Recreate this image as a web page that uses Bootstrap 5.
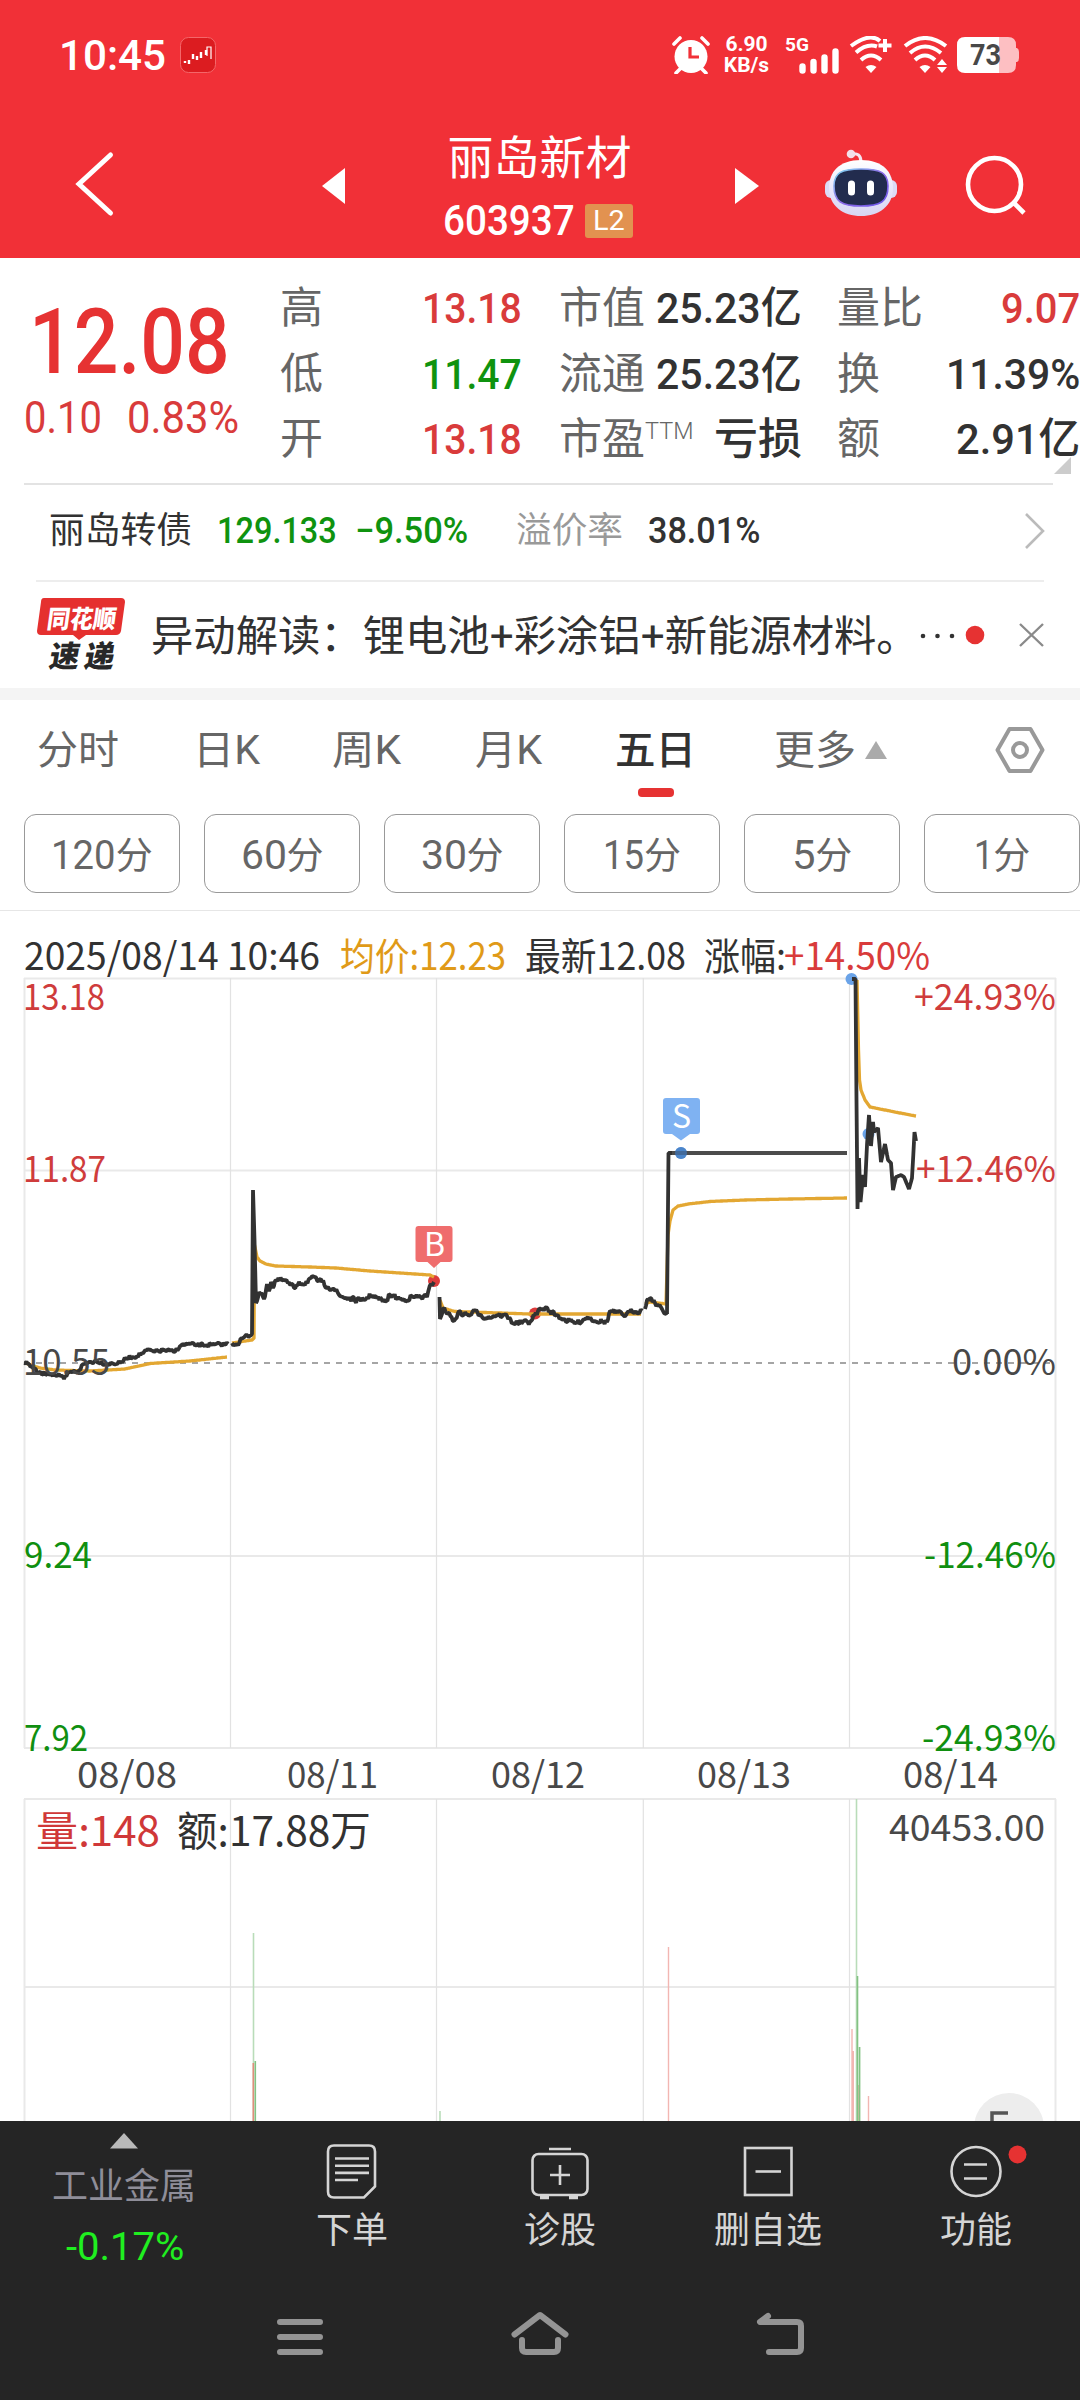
<!DOCTYPE html>
<html lang="zh-CN">
<head>
<meta charset="utf-8">
<meta name="viewport" content="width=device-width, initial-scale=1">
<title>丽岛新材 603937</title>
<link href="https://cdn.jsdelivr.net/npm/bootstrap@5.3.0/dist/css/bootstrap.min.css" rel="stylesheet">
<script src="https://cdn.jsdelivr.net/npm/bootstrap@5.3.0/dist/js/bootstrap.bundle.min.js"></script>
<style>
body{width:1080px;height:2400px;overflow:hidden;background:#fff;color:#323232;font-family:Roboto,"Noto Sans CJK SC",sans-serif;line-height:1}
svg{display:block;flex:none}
.fit{display:inline-block;white-space:nowrap;transform-origin:0 50%;flex:none}
.up{color:#d93b3b}.down{color:#0f930f}.soft{color:#666}
.app-head{height:258px;background:#f13037;color:#fff}
.status{height:112px;padding:0 60px 2px 59px}
.clock{font-size:43px;font-weight:500}
.speed{font-size:21px;font-weight:700;line-height:21px;text-align:center;width:47px;margin-left:13px}
.titlebar{height:146px}
.name-col{width:222px;padding-top:23px}
.stock-name{font-size:46px;height:46px;margin-left:-3px}
.code-row{margin:18px 6px 0 0}
.stock-code{font-size:43px;font-weight:500}
.lv2{width:48px;height:34px;background:#e29250;border-radius:3px;font-size:28px}
.quote{height:225px;padding-top:18px}
.price-col{width:257px;padding-left:23px}
.price{font-size:90px;font-weight:500;color:#e63232;margin:22px 0 0 6px;height:90px}
.chg{font-size:44px;margin-top:8px;gap:25px;padding-left:1px}
.qrow{height:65.5px;font-size:43px}
.qrow .lab{font-size:43px;color:#666}
.qrow .val{font-weight:500}
.c1{width:242px;margin-left:24px}.c2{width:243px;margin-left:37px}.c3{width:243px;margin-left:35px}
.ttm{font-size:23px;font-weight:300;position:relative;top:-8px;color:#666}
.rule-a{height:2px;background:#e3e3e3;margin:0 27px 0 24px}
.bond{height:95px;font-size:36px;padding:0 34px 3px 49px}
.rule-b{height:2px;background:#ededed;margin:0 36px}
.news{height:106px;padding:0 35px 0 36px;font-size:42px}
.band{height:12px;background:#f4f4f4}
.tabs{height:114px;font-size:40px;color:#666}
.tabs .on{font-weight:500;color:#323232}
.tabs .on::after{content:"";position:absolute;left:23px;top:57px;width:36px;height:9px;border-radius:4px;background:#e63232}
.mins{height:96px;padding:0 0 0 24px;gap:24px}
.mins .btn{width:156px;height:79px;flex:none;border:1px solid #999;border-radius:12px;color:#666;padding:4px 0 0 0;font-size:37px;background:#fff}
.mins .n{font-size:40px}
.rule-c{height:1px;background:#e6e6e6}
.foot{height:279px;background:#252525;color:#d5d5d5;font-size:36px}
.tool{height:164px}
.tool-item{width:208px;padding-top:21px}
.tool-item svg{height:58px;margin-bottom:13px}
</style>
</head>
<body>
<header class="app-head">
  <div class="status d-flex align-items-center">
    <span class="clock fit" data-w="107">10:45</span>
    <svg style="margin-left:14px" width="36" height="36" viewBox="0 0 36 36"><rect x=".5" y=".5" width="35" height="35" rx="8" fill="#dc1c20" stroke="#f4676a"/><path d="M5 24v2M9 23v4M13 17v5M17 19v4M21 15v6M26 13v5" stroke="#fff" stroke-width="2.4"/><path d="M27 19V10h4v12" fill="none" stroke="#fff" stroke-width="1.2"/></svg>
    <svg class="ms-auto" width="38" height="38" viewBox="0 0 38 38"><circle cx="19" cy="20.500" r="16.500" fill="#fff"/><path d="M2 8l6-6M36 8l-6-6M9 32l-5 5M29 32l5 5" stroke="#fff" stroke-width="3.600" stroke-linecap="round"/><path d="M18 11v10h9" fill="none" stroke="#f13037" stroke-width="3.200"/></svg>
    <div class="speed"><div>6.90</div><div>KB/s</div></div>
    <svg style="margin-left:15px" width="56" height="38" viewBox="0 0 56 38" overflow="visible"><text x="0" y="15" font-size="19" font-weight="700" fill="#fff" textLength="24" lengthAdjust="spacingAndGlyphs">5G</text><path d="M17.500 30.500v4M28.500 26v8.500M39.500 21.500v13M50.500 15.500v19" stroke="#fff" stroke-width="6.400" stroke-linecap="round"/></svg>
    <svg style="margin-left:8px" width="44" height="38" viewBox="0 0 44 38"><path d="M2 10Q21-4 31 5M7 16.500Q18 7 28 10.500M12 24Q22 15 32 24" fill="none" stroke="#fff" stroke-width="4"/><path d="M22 37l-5.500-6q5.500-4 11 0z" fill="#fff"/><path d="M36 3v13M29.500 9.500h13" stroke="#fff" stroke-width="4"/></svg>
    <svg style="margin-left:10px" width="46" height="38" viewBox="0 0 46 38"><path d="M2 10Q22-6 43 10M7 17Q22 4 38 17M12 24Q22 15 32 24" fill="none" stroke="#fff" stroke-width="4"/><path d="M22 37l-5.500-6q5.500-4 11 0zM39 23l5 6h-10zM39 37l5-6h-10z" fill="#fff"/></svg>
    <svg style="margin-left:7px" width="64" height="38" viewBox="0 0 64 38"><path d="M43 1h9q8 0 8 8v3h1q2 1 2 4v6q0 3-2 4h-1v3q0 8-8 8h-9z" fill="#fdbfc2"/><path d="M43 1H9Q1 1 1 9v20q0 8 8 8h34z" fill="#fff"/><text x="14" y="29" font-size="29" font-weight="700" fill="#484848" textLength="31" lengthAdjust="spacingAndGlyphs">73</text></svg>
  </div>
  <div class="titlebar d-flex">
    <svg width="430" height="146" viewBox="0 112 430 146"><path d="M110.500 155L79 184l31.500 29" fill="none" stroke="#fff" stroke-width="5" stroke-linecap="round"/><path d="M322 186l23-18v36z" fill="#fff"/></svg>
    <div class="name-col text-center">
      <div class="stock-name">丽岛新材</div>
      <div class="code-row d-flex justify-content-center align-items-center"><span class="stock-code fit" data-w="132">603937</span><span class="lv2 d-flex align-items-center justify-content-center" style="margin-left:11px"><span class="fit" data-w="32">L2</span></span></div>
    </div>
    <svg width="428" height="146" viewBox="652 112 428 146">
      <defs><linearGradient id="shell" x1="0" y1="0" x2="0" y2="1"><stop offset="0" stop-color="#fff"/><stop offset=".6" stop-color="#e5e3fa"/><stop offset="1" stop-color="#d8d6f2"/></linearGradient><linearGradient id="rim" x1="0" y1="0" x2="1" y2="1"><stop offset="0" stop-color="#7fdcf0"/><stop offset=".5" stop-color="#8e6be8"/><stop offset="1" stop-color="#6a55e8"/></linearGradient></defs>
      <path d="M735 168l24 18-24 18z" fill="#fff"/>
      <rect x="825" y="180" width="72" height="18" rx="6" fill="#dcdbf6"/>
      <path d="M851 154q10-2 10 8" fill="none" stroke="#f6e5ef" stroke-width="3"/><circle cx="851" cy="154" r="4.300" fill="#f3dfe9"/>
      <path d="M861 160c22 0 32 12 32 28 0 18-14 28-32 28s-32-10-32-28c0-16 10-28 32-28z" fill="url(#shell)"/>
      <path d="M861 169c20 0 27 4 27 17 0 16-8 20-27 20s-27-4-27-20c0-13 7-17 27-17z" fill="#222c4e" stroke="url(#rim)" stroke-width="1.600"/>
      <path d="M851.500 184v8M870.500 184v8" stroke="#fff" stroke-width="7" stroke-linecap="round"/>
      <circle cx="994.500" cy="184.500" r="26.500" fill="none" stroke="#fff" stroke-width="4.600"/><path d="M1014 203l10 10" stroke="#fff" stroke-width="4.600"/>
    </svg>
  </div>
</header>

<section class="quote d-flex position-relative">
  <div class="price-col">
    <div class="price"><span class="fit" data-w="201">12.08</span></div>
    <div class="chg d-flex up"><span class="fit" data-w="78">0.10</span><span class="fit" data-w="112">0.83%</span></div>
  </div>
  <div>
    <div class="qrow d-flex align-items-center">
      <div class="c1 d-flex justify-content-between align-items-center"><span class="lab">高</span><span class="val up fit" data-w="100">13.18</span></div>
      <div class="c2 d-flex justify-content-between align-items-center"><span class="lab">市值</span><span class="val fit" data-w="146">25.23亿</span></div>
      <div class="c3 d-flex justify-content-between align-items-center"><span class="lab">量比</span><span class="val up fit" data-w="79">9.07</span></div>
    </div>
    <div class="qrow d-flex align-items-center">
      <div class="c1 d-flex justify-content-between align-items-center"><span class="lab">低</span><span class="val down fit" data-w="100">11.47</span></div>
      <div class="c2 d-flex justify-content-between align-items-center"><span class="lab">流通</span><span class="val fit" data-w="146">25.23亿</span></div>
      <div class="c3 d-flex justify-content-between align-items-center"><span class="lab">换</span><span class="val fit" data-w="134">11.39%</span></div>
    </div>
    <div class="qrow d-flex align-items-center">
      <div class="c1 d-flex justify-content-between align-items-center"><span class="lab">开</span><span class="val up fit" data-w="100">13.18</span></div>
      <div class="c2 d-flex align-items-center"><span class="lab">市盈</span><span class="ttm fit" data-w="49">TTM</span><span class="val fit ms-auto" data-w="88">亏损</span></div>
      <div class="c3 d-flex justify-content-between align-items-center"><span class="lab">额</span><span class="val fit" data-w="124">2.91亿</span></div>
    </div>
  </div>
  <svg class="position-absolute bottom-0 end-0 me-2 mb-2" width="18" height="18" viewBox="0 0 18 18"><path d="M17 0v17H0z" fill="#ccc"/></svg>
</section>
<div class="rule-a"></div>
<div class="bond d-flex align-items-center">
  <span class="fit" data-w="143">丽岛转债</span>
  <span class="fit down fw-medium" data-w="120" style="margin-left:25px">129.133</span>
  <span class="fit down fw-medium" data-w="113" style="margin-left:18px">−9.50%</span>
  <span class="fit" data-w="107" style="margin-left:48px;color:#999">溢价率</span>
  <span class="fit fw-medium" data-w="112" style="margin-left:25px">38.01%</span>
  <svg class="ms-auto" width="22" height="38" viewBox="0 0 22 38"><path d="M2 2l17 17L2 36" fill="none" stroke="#bbb" stroke-width="2.600"/></svg>
</div>
<div class="rule-b"></div>
<div class="news d-flex align-items-center">
  <svg width="90" height="76" viewBox="36 597 90 76"><path d="M44 598h77q4 0 4 4l-4 29q-1 4-5 4H86l-7 5-6-5H41q-4 0-4-4l4-29q0-4 3-4z" fill="#e5302f"/><text transform="translate(46 628) skewX(-8)" font-size="25" font-weight="900" fill="#fff" textLength="69" lengthAdjust="spacingAndGlyphs">同花顺</text><text transform="translate(48 667) skewX(-10)" font-size="30" font-weight="900" fill="#282828" textLength="65" lengthAdjust="spacing">速递</text></svg>
  <span class="fit pt-1" style="margin-left:25px" data-w="768">异动解读：锂电池+彩涂铝+新能源材料。</span>
  <svg class="ms-auto" width="126" height="38" viewBox="919 615 126 38"><circle cx="923" cy="635" r="2.300" fill="#323232"/><circle cx="937.500" cy="635" r="2.300" fill="#323232"/><circle cx="952" cy="635" r="2.300" fill="#323232"/><circle cx="975" cy="634" r="9.300" fill="#e63232"/><path d="M1020 623l23 22M1043 623l-23 22" stroke="#8a8a8a" stroke-width="2.400"/></svg>
</div>
<div class="band"></div>
<nav class="tabs d-flex align-items-center" style="padding:0 35px 13px 37px">
  <span class="fit" data-w="82">分时</span>
  <span class="fit" data-w="67" style="margin-left:74px">日K</span>
  <span class="fit" data-w="69" style="margin-left:72px">周K</span>
  <span class="fit" data-w="67" style="margin-left:74px">月K</span>
  <span class="on position-relative" style="margin-left:73px"><span class="fit" data-w="81">五日</span></span>
  <span class="fit" data-w="82" style="margin-left:78px">更多</span>
  <svg style="margin-left:8px" width="24" height="20" viewBox="0 1 24 20"><path d="M12 1l11 18H1z" fill="#aaa"/></svg>
  <svg class="ms-auto" width="50" height="48" viewBox="0 1 50 48"><path d="M14.500 3h21L47.500 24l-12 21h-21L2.500 24z" fill="none" stroke="#999" stroke-width="4" stroke-linejoin="round"/><circle cx="25" cy="24" r="7" fill="none" stroke="#999" stroke-width="4"/></svg>
</nav>
<div class="mins d-flex overflow-hidden">
  <button class="btn"><span class="n fit" data-w="64">120</span>分</button>
  <button class="btn"><span class="n fit" data-w="46">60</span>分</button>
  <button class="btn"><span class="n fit" data-w="46">30</span>分</button>
  <button class="btn"><span class="n fit" data-w="41">15</span>分</button>
  <button class="btn"><span class="n fit" data-w="23">5</span>分</button>
  <button class="btn"><span class="n fit" data-w="19">1</span>分</button>
</div>
<div class="rule-c"></div>
<svg id="chart" width="1080" height="1210" viewBox="0 911 1080 1210" font-family="'Noto Sans CJK SC',sans-serif" fill="#323232">
  <g stroke="#e9e9e9" stroke-width="2" fill="none">
    <path d="M24 978.500H1056M24 1170.500H1056M24 1556H1056M24 1748H1056M24 1799H1056M24 1987H1056"/>
    <path d="M24.500 978V1748M1055.500 978V1748M24.500 1799V2121M1055.500 1799V2121"/>
    <path stroke="#e2e2e2" stroke-width="1.200" d="M230.500 978V1748M436.500 978V1748M643.300 978V1748M849.500 978V1748M230.500 1799V2121M436.500 1799V2121M643.300 1799V2121M849.500 1799V2121"/>
  </g>
  <path d="M24 1363H1056" stroke="#888" stroke-width="1.600" stroke-dasharray="6 6"/>
  <g fill="none" stroke-width="1.400">
    <path stroke="#b9dcb9" d="M253.500 1933V2121M856.500 1799V2121M440 2111V2121" stroke-width="1.600"/>
    <path stroke="#f2b6b2" d="M668.500 1947V2121M852 2029V2121M853.300 2051V2121M868.500 2096V2121"/>
    <path stroke="#e08c7c" d="M253.300 2063V2121M859.200 2085V2121" stroke-width="1.600"/>
    <path stroke="#83c283" d="M255.300 2061V2121M857.500 1976V2121M859.600 2047V2121" stroke-width="1.600"/>
  </g>
  <circle cx="1009" cy="2128" r="35" fill="#ededed"/><path d="M992 2124v-11h16" stroke="#555" stroke-width="3.500" fill="none"/>
  <g fill="#6aa3e8"><circle cx="851.500" cy="979" r="6"/><circle cx="868.500" cy="1134" r="6"/><circle cx="681" cy="1153" r="6"/></g>
  <g fill="#dc3b3b"><circle cx="434" cy="1281" r="6"/><circle cx="535" cy="1313.500" r="6"/></g>
  <g id="avg" fill="none" stroke="#e3a732" stroke-width="3.300" stroke-linejoin="round"></g>
  <g id="px" fill="none" stroke="#323232" stroke-width="3.800" stroke-linejoin="bevel"></g>
  <path d="M672 1153H847" stroke="#4c4c4c" stroke-width="3.800"/><circle cx="681" cy="1153" r="6" fill="#3f78bd" opacity=".7"/>
  <path d="M418.500 1226h31q3 0 3 3v30q0 3-3 3h-9l-6.500 6-6.500-6h-9q-3 0-3-3v-30q0-3 3-3z" fill="#ef6d6d"/>
  <path d="M666 1098h31q3 0 3 3v30q0 3-3 3h-7l-9 6.500-9-6.500h-6q-3 0-3-3v-30q0-3 3-3z" fill="#7fb2f2"/>
  <g fill="#fff" font-size="32" text-anchor="middle"><text x="434.500" y="1256">B</text><text x="681.500" y="1128">S</text></g>
  <g font-size="38">
    <text x="24" y="969.500" textLength="296" lengthAdjust="spacingAndGlyphs">2025/08/14 10:46</text>
    <text x="340" y="969.500" textLength="166" lengthAdjust="spacingAndGlyphs" fill="#e09a18">均价:12.23</text>
    <text x="525" y="969.500" textLength="161" lengthAdjust="spacingAndGlyphs">最新12.08</text>
    <text x="704" y="969.500" textLength="82" lengthAdjust="spacingAndGlyphs">涨幅:</text>
    <text x="784" y="969.500" textLength="146" lengthAdjust="spacingAndGlyphs" fill="#d93b3b">+14.50%</text>
  </g>
  <g font-size="36" fill="#cf3c3c">
    <text x="23" y="1010" textLength="82" lengthAdjust="spacingAndGlyphs">13.18</text><text x="23" y="1182" textLength="83" lengthAdjust="spacingAndGlyphs">11.87</text>
    <text x="914" y="1010" textLength="142" lengthAdjust="spacingAndGlyphs">+24.93%</text><text x="916" y="1182" textLength="140" lengthAdjust="spacingAndGlyphs">+12.46%</text>
  </g>
  <g font-size="36" fill="#484848">
    <text x="23" y="1375" textLength="87" lengthAdjust="spacingAndGlyphs">10.55</text><text x="952" y="1375" textLength="104" lengthAdjust="spacingAndGlyphs">0.00%</text>
    <text x="77" y="1788" textLength="100" lengthAdjust="spacingAndGlyphs">08/08</text><text x="287" y="1788" textLength="91" lengthAdjust="spacingAndGlyphs">08/11</text><text x="491" y="1788" textLength="94" lengthAdjust="spacingAndGlyphs">08/12</text><text x="697" y="1788" textLength="94" lengthAdjust="spacingAndGlyphs">08/13</text><text x="903" y="1788" textLength="95" lengthAdjust="spacingAndGlyphs">08/14</text>
    <text x="889" y="1840.500" textLength="156" lengthAdjust="spacingAndGlyphs">40453.00</text>
  </g>
  <g font-size="36" fill="#108f10">
    <text x="24" y="1568" textLength="68" lengthAdjust="spacingAndGlyphs">9.24</text><text x="24" y="1750.500" textLength="64" lengthAdjust="spacingAndGlyphs">7.92</text>
    <text x="924" y="1568" textLength="132" lengthAdjust="spacingAndGlyphs">-12.46%</text><text x="922" y="1750.500" textLength="134" lengthAdjust="spacingAndGlyphs">-24.93%</text>
  </g>
  <g font-size="41"><text x="36" y="1846" textLength="124" lengthAdjust="spacingAndGlyphs" fill="#d03838">量:148</text><text x="177" y="1846" textLength="194" lengthAdjust="spacingAndGlyphs">额:17.88万</text></g>
</svg>

<footer class="foot">
  <div class="tool d-flex">
    <div class="d-flex flex-column align-items-center" style="width:248px;padding-top:12px">
      <svg width="28" height="16" viewBox="0 0 28 16"><path d="M14 0l14 15.500H0z" fill="#b9b9b9"/></svg>
      <div style="color:#8f8e99;margin-top:20px">工业金属</div>
      <div class="fit" data-w="118" style="color:#20ef20;font-size:38px;margin:23px 0 0 3px">-0.17%</div>
    </div>
    <div class="tool-item d-flex flex-column align-items-center">
      <svg width="58" height="58" viewBox="324 2142 58 58" fill="none" stroke="#d5d5d5" stroke-width="2.600"><path d="M335 2145.500h35q6 0 6 6v35l-11 11h-30q-6 0-6-6v-40q0-6 6-6z"/><path d="M336 2158.500h34M336 2165.700h34M336 2172.900h34M336 2180h23"/></svg>
      <span>下单</span></div>
    <div class="tool-item d-flex flex-column align-items-center">
      <svg width="60" height="58" viewBox="530 2142 60 58" fill="none" stroke="#d5d5d5" stroke-width="2.600"><rect x="532.500" y="2154" width="55" height="41" rx="6"/><path d="M549 2149h22M560 2165v20M550 2175h20"/><path d="M540 2197.500h9M569 2197.500h9" stroke-width="3.500"/></svg>
      <span>诊股</span></div>
    <div class="tool-item d-flex flex-column align-items-center">
      <svg width="58" height="58" viewBox="738 2142 58 58" fill="none" stroke="#d5d5d5" stroke-width="2.600"><rect x="744" y="2148" width="46.500" height="47"/><path d="M754.500 2171.500h25.500"/></svg>
      <span>删自选</span></div>
    <div class="tool-item d-flex flex-column align-items-center position-relative">
      <svg width="58" height="58" viewBox="947 2142 58 58" fill="none" stroke="#d5d5d5" stroke-width="2.600"><circle cx="976" cy="2171.500" r="24.500"/><path d="M964 2164.500h23M964 2178.500h23"/></svg>
      <svg class="position-absolute" style="left:136px;top:24px;width:19px;height:19px" viewBox="0 0 19 19"><circle cx="9.500" cy="9.500" r="9" fill="#e63232"/></svg>
      <span>功能</span></div>
  </div>
  <svg width="1080" height="115" viewBox="0 2285 1080 115" fill="none" stroke="#949494" stroke-width="6" stroke-linecap="round" stroke-linejoin="round"><path d="M280 2322h40M280 2337h40M280 2352h40"/><path d="M514.500 2334.500L540 2315l25.500 19.500M522 2340v8q0 4 4 4h28q4 0 4-4v-8"/><path d="M768 2316l-8 6H797q4 0 4 4v22q0 4-4 4h-28"/></svg>
</footer>
<script>
document.querySelectorAll('.fit').forEach(function(e){
  var w=+e.dataset.w,n=e.offsetWidth;
  e.style.transform='scaleX('+w/n+')';e.style.marginRight=(w-n)+'px';
});
// Intraday series, one list of x,y points per trading day; the third value is tick noise
var seed=7;function rnd(){seed=(seed*16807)%2147483647;return seed/2147483647-.5}
function draw(id,pts,noise){
  var d='M'+pts[0],i,k;
  for(i=1;i<pts.length;i++){
    var a=pts[i-1],b=pts[i],n=Math.max(1,Math.round((b[0]-a[0])/1.2));
    for(k=1;k<=n;k++){var j=k<n?rnd()*noise:0;d+='L'+(a[0]+(b[0]-a[0])*k/n).toFixed(1)+' '+(a[1]+(b[1]-a[1])*k/n+j).toFixed(1)}
  }
  var p=document.createElementNS('http://www.w3.org/2000/svg','path');p.setAttribute('d',d);document.getElementById(id).appendChild(p);
}
draw('avg',[[25,1363],[40,1368],[55,1370],[90,1371],[125,1369],[150,1363.5],[190,1361],[227,1357]],0);
draw('avg',[[232,1343],[252,1340],[254,1338],[254.500,1245],[257,1257],[260,1261],[266,1264],[276,1266],[310,1267],[336,1268],[370,1271],[400,1273],[430,1275],[434,1277]],0);
draw('avg',[[440,1300],[443,1308],[455,1311.500],[530,1314],[641,1314]],0);
draw('avg',[[645,1304],[650,1302],[666,1304],[668,1235],[670,1221],[673,1210],[678,1206],[688,1204],[710,1201.500],[745,1200],[790,1199],[847,1198]],0);
draw('avg',[[857,980],[858.500,1050],[859.500,1080],[861,1090],[865,1100],[870,1107],[885,1110],[900,1113],[916,1116]],0);
draw('px',[[24,1363],[29,1364],[33,1368],[37,1372],[43,1374],[48,1373],[55,1375],[60,1376],[64,1379],[70,1372],[77,1372],[84,1364],[90,1362],[97,1361],[106,1364],[120,1363],[127,1358],[137,1356],[144,1352],[149,1350],[154,1352],[163,1350],[174,1352],[180,1346],[187,1344],[196,1345],[212,1345],[228,1344]],4);
draw('px',[[232,1343],[237,1344],[243,1338],[252,1334],[253,1190],[254.500,1240],[256,1303],[259,1292],[264,1299],[267,1284],[269,1291],[271,1282],[273,1288],[275,1281],[284,1280],[294,1288],[299,1282],[304,1284],[311,1278],[322,1282],[328,1287],[334,1289],[340,1296],[350,1299],[361,1301],[372,1295],[377,1298],[385,1302],[390,1295],[403,1300],[413,1297],[427,1297],[431,1284],[434,1282]],5.500);
draw('px',[[439.500,1297],[440,1319],[443,1309],[448,1313],[454,1321],[458,1313],[470,1315],[475,1311],[481,1315],[486,1318],[497,1315],[507,1316],[513,1323],[530,1322],[538,1311],[545,1308],[556,1315],[565,1320],[577,1323],[588,1317],[596,1321],[607,1322],[610,1311],[626,1315],[632,1311],[642,1311]],5);
draw('px',[[645,1309],[647,1300],[650,1298],[655,1303],[662,1309],[664,1313],[667,1312]],4);
draw('px',[[667,1314],[668.500,1153],[675,1153]],0);
draw('px',[[852,979],[855.500,979],[856.500,1100],[857.500,1209],[859,1158],[860.500,1202],[863,1175],[865,1187],[867,1145],[869,1115],[871,1146],[873,1122],[874,1132],[878,1128],[881,1162],[885,1144],[888,1160],[891,1163],[893,1190],[896,1177],[901,1175],[904,1177],[909,1189],[912,1178],[914.500,1132],[916,1141]],0);
</script>
</body>
</html>
